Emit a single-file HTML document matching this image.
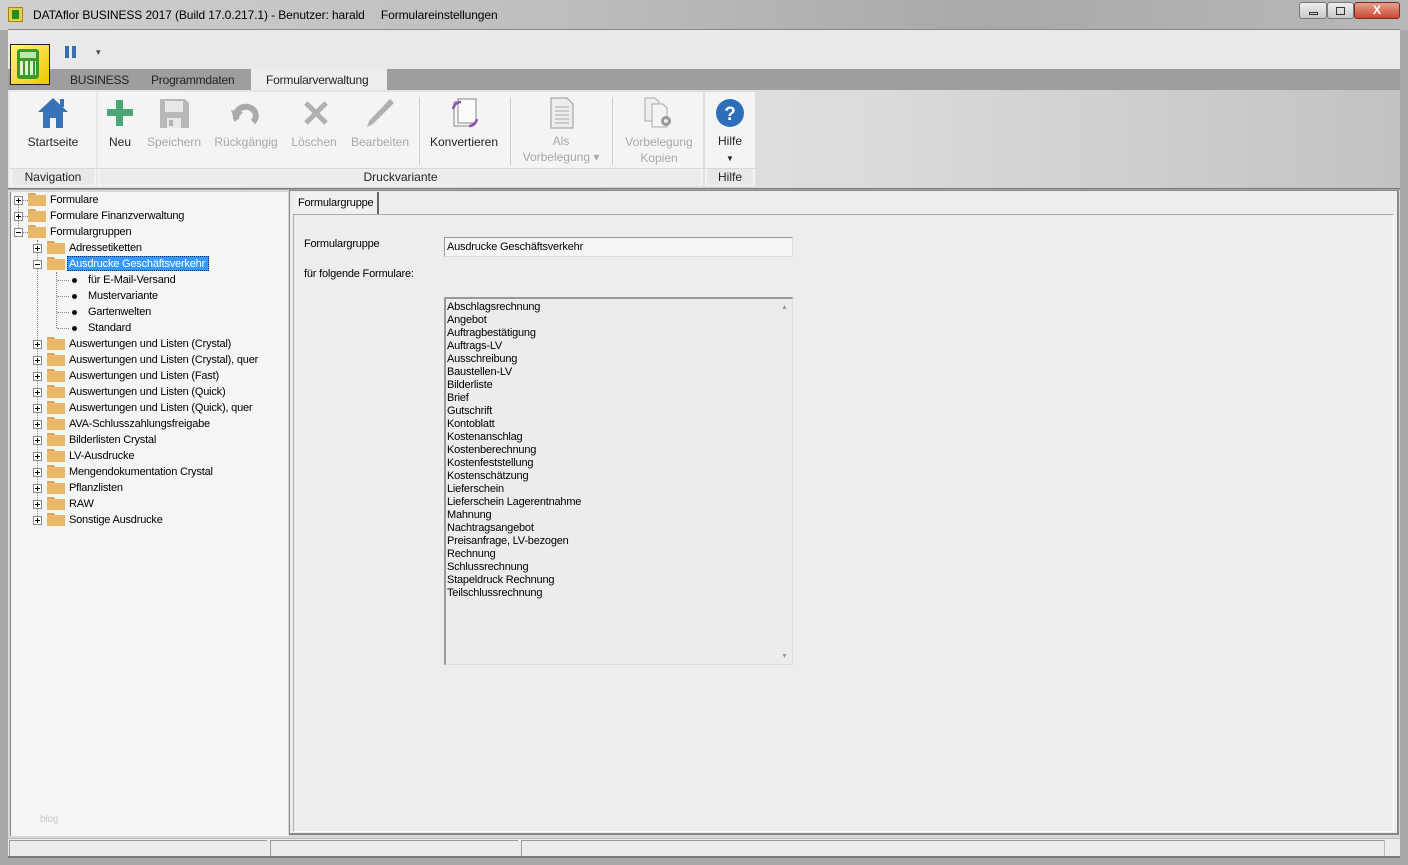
<!DOCTYPE html>
<html><head><meta charset="utf-8"><style>
*{margin:0;padding:0;box-sizing:border-box}
body{width:1408px;height:865px;position:relative;overflow:hidden;font-family:"Liberation Sans",sans-serif;font-size:11px;color:#000;background:#a8a8a8}
.a{position:absolute}
.t{position:absolute;white-space:nowrap;font-size:11px;line-height:14px;letter-spacing:-0.2px}
.rb{font-size:12px;color:#222;text-align:center;line-height:16px;letter-spacing:0}
.dis{color:#a8a8a8}
.exp{position:absolute;width:9px;height:9px;border:1px solid #8a8a8a;background:#fff}
.exp:before{content:"";position:absolute;left:1px;top:3px;width:5px;height:1px;background:#000}
.exp.p:after{content:"";position:absolute;left:3px;top:1px;width:1px;height:5px;background:#000}
.fo{position:absolute;width:18px;height:13px}
.fo:before{content:"";position:absolute;left:0;top:0;width:8px;height:4px;background:#d8a85a;border-radius:1px 2px 0 0}
.fo:after{content:"";position:absolute;left:0;top:2px;width:18px;height:11px;background:#e8b86a}
.dot{position:absolute;width:5px;height:5px;border-radius:50%;background:#111}
.vl{position:absolute;border-left:1px dotted #888;width:0}
.hl{position:absolute;border-top:1px dotted #888;height:0}
</style></head><body>
<div class="a" style="left:0;top:0;width:1408px;height:30px;background:linear-gradient(90deg,#cfcfcf 0%,#bdbdbd 40%,#a9a9a9 70%,#b8b8b8 100%)"></div>
<div class="a" style="left:8px;top:7px;width:15px;height:15px;background:#e8d040;border:1px solid #9a8a20"><div class="a" style="left:3px;top:2px;width:7px;height:9px;background:#2a8a2a"></div></div>
<div class="t" style="left:33px;top:8px;font-size:12px;letter-spacing:-0.1px">DATAflor BUSINESS 2017 (Build 17.0.217.1) - Benutzer: harald&nbsp;&nbsp;&nbsp;&nbsp; Formulareinstellungen</div>
<div class="a" style="left:1299px;top:2px;width:28px;height:17px;border:1px solid #777;border-radius:3px;background:linear-gradient(#eee,#c8c8c8)"><div class="a" style="left:9px;top:9px;width:9px;height:3px;border:1px solid #333"></div></div>
<div class="a" style="left:1327px;top:2px;width:27px;height:17px;border:1px solid #777;border-radius:3px;background:linear-gradient(#eee,#c8c8c8)"><div class="a" style="left:8px;top:4px;width:9px;height:8px;border:1px solid #333"></div></div>
<div class="a" style="left:1354px;top:2px;width:46px;height:17px;border:1px solid #7a2a20;border-radius:3px;background:linear-gradient(#e8a090,#c84a30);color:#fff;font-weight:bold;font-size:12px;text-align:center;line-height:15px">X</div>
<div class="a" style="left:8px;top:29px;width:1392px;height:40px;background:#e9e9e9;border-top:1px solid #888"></div>
<div class="a" style="left:8px;top:69px;width:1392px;height:21px;background:#9e9e9e"></div>
<div class="a" style="left:10px;top:44px;width:40px;height:41px;background:linear-gradient(135deg,#fff27a,#f0c800);border:1px solid #222"><div class="a" style="left:6px;top:4px;width:22px;height:30px;background:#3a9a2a;border-radius:3px"><div class="a" style="left:3px;top:3px;width:16px;height:6px;background:#bfe8a8"></div><div class="a" style="left:3px;top:12px;width:16px;height:14px;background:repeating-linear-gradient(90deg,#e0f0d0 0 3px,transparent 3px 5px)"></div></div></div>
<div class="a" style="left:65px;top:46px;width:4px;height:12px;background:#3a6fb0"></div><div class="a" style="left:72px;top:46px;width:4px;height:12px;background:#3a6fb0"></div>
<div class="t" style="left:96px;top:45px;font-size:9px;color:#444">▾</div>
<div class="t" style="left:70px;top:73px;font-size:12px;color:#222">BUSINESS</div>
<div class="t" style="left:151px;top:73px;font-size:12px;color:#222">Programmdaten</div>
<div class="a" style="left:251px;top:69px;width:136px;height:22px;background:#ededed"></div>
<div class="t" style="left:266px;top:73px;font-size:12px;color:#222">Formularverwaltung</div>
<div class="a" style="left:8px;top:90px;width:1392px;height:99px;background:linear-gradient(90deg,#e8e8e8 0%,#dcdcdc 60%,#c2c2c2 100%);border-bottom:1px solid #777"></div>
<div class="a" style="left:10px;top:92px;width:86px;height:94px;background:#f4f4f4"></div>
<div class="a" style="left:98px;top:92px;width:605px;height:94px;background:#f4f4f4"></div>
<div class="a" style="left:705px;top:92px;width:50px;height:94px;background:#f4f4f4"></div>
<div class="a" style="left:10px;top:168px;width:745px;height:1px;background:#d8d8d8"></div>
<div class="a" style="left:12px;top:169px;width:82px;height:16px;background:#e8e8e8"></div>
<div class="a" style="left:100px;top:169px;width:601px;height:16px;background:#ececec"></div>
<div class="a" style="left:707px;top:169px;width:46px;height:16px;background:#e8e8e8"></div>
<div class="t rb" style="left:10px;top:169px;width:86px">Navigation</div>
<div class="t rb" style="left:98px;top:169px;width:605px">Druckvariante</div>
<div class="t rb" style="left:705px;top:169px;width:50px">Hilfe</div>
<div class="a" style="left:419px;top:97px;width:1px;height:68px;background:#ccc"></div>
<div class="a" style="left:510px;top:97px;width:1px;height:68px;background:#ccc"></div>
<div class="a" style="left:612px;top:97px;width:1px;height:68px;background:#ccc"></div>
<svg class="a" style="left:36px;top:96px" width="34" height="34"><path d="M17 2 L2 16 H7 V32 H14 V22 H20 V32 H27 V16 H32 Z" fill="#3a72b8"/><rect x="24" y="3" width="4" height="8" fill="#3a72b8"/></svg>
<svg class="a" style="left:106px;top:99px" width="28" height="28"><rect x="10" y="1" width="7" height="26" fill="#4aa878"/><rect x="1" y="10" width="26" height="7" fill="#4aa878"/></svg>
<svg class="a" style="left:159px;top:98px" width="31" height="31"><path d="M1 1 H26 L30 5 V30 H1 Z" fill="#b8b8b8"/><rect x="6" y="3" width="18" height="11" fill="#e8e8e8"/><rect x="8" y="20" width="14" height="10" fill="#e8e8e8"/><rect x="10" y="22" width="4" height="6" fill="#b0b0b0"/></svg>
<svg class="a" style="left:231px;top:100px" width="32" height="26"><path d="M6 20 A10 9 0 1 1 22 22" stroke="#aaa" stroke-width="6" fill="none"/><path d="M0 10 L12 12 L4 22 Z" fill="#aaa"/></svg>
<svg class="a" style="left:303px;top:100px" width="26" height="26"><path d="M3 3 L23 23 M23 3 L3 23" stroke="#b0b0b0" stroke-width="5"/></svg>
<svg class="a" style="left:364px;top:97px" width="32" height="32"><path d="M26 2 L30 6 L9 27 L3 30 L5 24 Z" fill="#b0b0b0"/></svg>
<svg class="a" style="left:449px;top:97px" width="32" height="32"><rect x="5" y="5" width="18" height="24" fill="#f6f6f6" stroke="#888"/><rect x="9" y="2" width="18" height="24" fill="#fafafa" stroke="#888"/><path d="M4 12 Q6 5 12 5" stroke="#9050b0" stroke-width="2.5" fill="none"/><path d="M28 22 Q26 29 20 29" stroke="#9050b0" stroke-width="2.5" fill="none"/></svg>
<svg class="a" style="left:549px;top:97px" width="26" height="32"><path d="M2 1 H18 L24 7 V31 H2 Z" fill="#ececec" stroke="#999"/><path d="M6 10 H20 M6 14 H20 M6 18 H20 M6 22 H20 M6 26 H20" stroke="#aaa"/></svg>
<svg class="a" style="left:643px;top:97px" width="34" height="34"><path d="M2 1 H12 L16 5 V24 H2 Z" fill="#eee" stroke="#aaa"/><path d="M9 7 H20 L24 11 V30 H9 Z" fill="#f4f4f4" stroke="#aaa"/><circle cx="23" cy="24" r="5" fill="#999"/><circle cx="23" cy="24" r="2" fill="#eee"/></svg>
<svg class="a" style="left:715px;top:98px" width="30" height="30"><circle cx="15" cy="15" r="14" fill="#2c6eb8"/><text x="15" y="22" font-family="Liberation Sans" font-weight="bold" font-size="19" fill="#fff" text-anchor="middle">?</text></svg>
<div class="t rb" style="left:20px;top:134px;width:66px">Startseite</div>
<div class="t rb" style="left:100px;top:134px;width:40px">Neu</div>
<div class="t rb dis" style="left:143px;top:134px;width:62px">Speichern</div>
<div class="t rb dis" style="left:210px;top:134px;width:72px">Rückgängig</div>
<div class="t rb dis" style="left:286px;top:134px;width:56px">Löschen</div>
<div class="t rb dis" style="left:346px;top:134px;width:68px">Bearbeiten</div>
<div class="t rb" style="left:424px;top:134px;width:80px">Konvertieren</div>
<div class="t rb dis" style="left:516px;top:133px;width:90px">Als<br>Vorbelegung ▾</div>
<div class="t rb dis" style="left:615px;top:134px;width:88px">Vorbelegung<br>Kopien</div>
<div class="t rb" style="left:705px;top:133px;width:50px">Hilfe<br><span style="font-size:8px">▼</span></div>
<div class="a" style="left:8px;top:190px;width:1392px;height:668px;background:#d8d8d8"></div>
<div class="a" style="left:10px;top:192px;width:278px;height:644px;background:#f5f5f5;border-left:1px solid #888"></div>
<div class="a" style="left:289px;top:190px;width:1110px;height:645px;background:#ededed;border:1px solid #888;border-right:2px solid #888;border-bottom:2px solid #888"></div>
<div class="t" style="left:40px;top:813px;color:#c8c8c8;font-size:10px">blog</div>
<div class="a" style="left:8px;top:838px;width:1392px;height:20px;background:#ececec;border-top:1px solid #bbb;border-bottom:2px solid #777"></div>
<div class="a" style="left:9px;top:840px;width:258px;height:16px;border-top:1px solid #999;border-left:1px solid #999"></div>
<div class="a" style="left:270px;top:840px;width:248px;height:16px;border-top:1px solid #999;border-left:1px solid #999"></div>
<div class="a" style="left:521px;top:840px;width:864px;height:16px;border-top:1px solid #999;border-left:1px solid #999;border-right:1px solid #bbb"></div>
<div class="a" style="left:293px;top:192px;width:86px;height:22px;background:#f0f0f0;border-right:2px solid #666"></div>
<div class="t" style="left:298px;top:196px">Formulargruppe</div>
<div class="a" style="left:293px;top:214px;width:1101px;height:618px;border-top:1px solid #aaa;border-left:1px solid #aaa;border-right:1px solid #fff;border-bottom:1px solid #fff"></div>
<div class="t" style="left:304px;top:237px">Formulargruppe</div>
<div class="t" style="left:304px;top:267px">für folgende Formulare:</div>
<div class="a" style="left:444px;top:237px;width:349px;height:20px;background:#f4f6f6;border:1px solid #999;border-right-color:#ddd;border-bottom-color:#ddd"></div>
<div class="t" style="left:447px;top:240px">Ausdrucke Geschäftsverkehr</div>
<div class="a" style="left:444px;top:297px;width:349px;height:368px;background:#ececec;border:2px solid #999;border-right:1px solid #ddd;border-bottom:1px solid #ddd"></div>
<div class="t" style="left:781px;top:301px;font-size:7px;color:#999">▲</div>
<div class="t" style="left:781px;top:650px;font-size:7px;color:#999">▼</div>
<div class="t" style="left:447px;top:301px;line-height:13px">Abschlagsrechnung<br>Angebot<br>Auftragbestätigung<br>Auftrags-LV<br>Ausschreibung<br>Baustellen-LV<br>Bilderliste<br>Brief<br>Gutschrift<br>Kontoblatt<br>Kostenanschlag<br>Kostenberechnung<br>Kostenfeststellung<br>Kostenschätzung<br>Lieferschein<br>Lieferschein Lagerentnahme<br>Mahnung<br>Nachtragsangebot<br>Preisanfrage, LV-bezogen<br>Rechnung<br>Schlussrechnung<br>Stapeldruck Rechnung<br>Teilschlussrechnung</div>
<div class="vl" style="left:18px;top:204px;height:28px"></div>
<div class="vl" style="left:37px;top:240px;height:280px"></div>
<div class="vl" style="left:56px;top:272px;height:56px"></div>
<div class="hl" style="left:23px;top:200px;width:5px"></div>
<div class="hl" style="left:23px;top:216px;width:5px"></div>
<div class="hl" style="left:23px;top:232px;width:5px"></div>
<div class="hl" style="left:57px;top:280px;width:12px"></div>
<div class="hl" style="left:57px;top:296px;width:12px"></div>
<div class="hl" style="left:57px;top:312px;width:12px"></div>
<div class="hl" style="left:57px;top:328px;width:12px"></div>
<div class="exp p" style="left:14px;top:196px"></div><div class="fo" style="left:28px;top:193px"></div><div class="t" style="left:50px;top:193px">Formulare</div>
<div class="exp p" style="left:14px;top:212px"></div><div class="fo" style="left:28px;top:209px"></div><div class="t" style="left:50px;top:209px">Formulare Finanzverwaltung</div>
<div class="exp" style="left:14px;top:228px"></div><div class="fo" style="left:28px;top:225px"></div><div class="t" style="left:50px;top:225px">Formulargruppen</div>
<div class="exp p" style="left:33px;top:244px"></div><div class="fo" style="left:47px;top:241px"></div><div class="t" style="left:69px;top:241px">Adressetiketten</div>
<div class="exp" style="left:33px;top:260px"></div><div class="fo" style="left:47px;top:257px"></div><div class="a" style="left:67px;top:256px;width:142px;height:15px;background:#3399ff;border:1px dotted #036"></div><div class="t" style="left:69px;top:257px;color:#fff">Ausdrucke Geschäftsverkehr</div>
<div class="dot" style="left:72px;top:278px"></div><div class="t" style="left:88px;top:273px">für E-Mail-Versand</div>
<div class="dot" style="left:72px;top:294px"></div><div class="t" style="left:88px;top:289px">Mustervariante</div>
<div class="dot" style="left:72px;top:310px"></div><div class="t" style="left:88px;top:305px">Gartenwelten</div>
<div class="dot" style="left:72px;top:326px"></div><div class="t" style="left:88px;top:321px">Standard</div>
<div class="exp p" style="left:33px;top:340px"></div><div class="fo" style="left:47px;top:337px"></div><div class="t" style="left:69px;top:337px">Auswertungen und Listen (Crystal)</div>
<div class="exp p" style="left:33px;top:356px"></div><div class="fo" style="left:47px;top:353px"></div><div class="t" style="left:69px;top:353px">Auswertungen und Listen (Crystal), quer</div>
<div class="exp p" style="left:33px;top:372px"></div><div class="fo" style="left:47px;top:369px"></div><div class="t" style="left:69px;top:369px">Auswertungen und Listen (Fast)</div>
<div class="exp p" style="left:33px;top:388px"></div><div class="fo" style="left:47px;top:385px"></div><div class="t" style="left:69px;top:385px">Auswertungen und Listen (Quick)</div>
<div class="exp p" style="left:33px;top:404px"></div><div class="fo" style="left:47px;top:401px"></div><div class="t" style="left:69px;top:401px">Auswertungen und Listen (Quick), quer</div>
<div class="exp p" style="left:33px;top:420px"></div><div class="fo" style="left:47px;top:417px"></div><div class="t" style="left:69px;top:417px">AVA-Schlusszahlungsfreigabe</div>
<div class="exp p" style="left:33px;top:436px"></div><div class="fo" style="left:47px;top:433px"></div><div class="t" style="left:69px;top:433px">Bilderlisten Crystal</div>
<div class="exp p" style="left:33px;top:452px"></div><div class="fo" style="left:47px;top:449px"></div><div class="t" style="left:69px;top:449px">LV-Ausdrucke</div>
<div class="exp p" style="left:33px;top:468px"></div><div class="fo" style="left:47px;top:465px"></div><div class="t" style="left:69px;top:465px">Mengendokumentation Crystal</div>
<div class="exp p" style="left:33px;top:484px"></div><div class="fo" style="left:47px;top:481px"></div><div class="t" style="left:69px;top:481px">Pflanzlisten</div>
<div class="exp p" style="left:33px;top:500px"></div><div class="fo" style="left:47px;top:497px"></div><div class="t" style="left:69px;top:497px">RAW</div>
<div class="exp p" style="left:33px;top:516px"></div><div class="fo" style="left:47px;top:513px"></div><div class="t" style="left:69px;top:513px">Sonstige Ausdrucke</div>
</body></html>
